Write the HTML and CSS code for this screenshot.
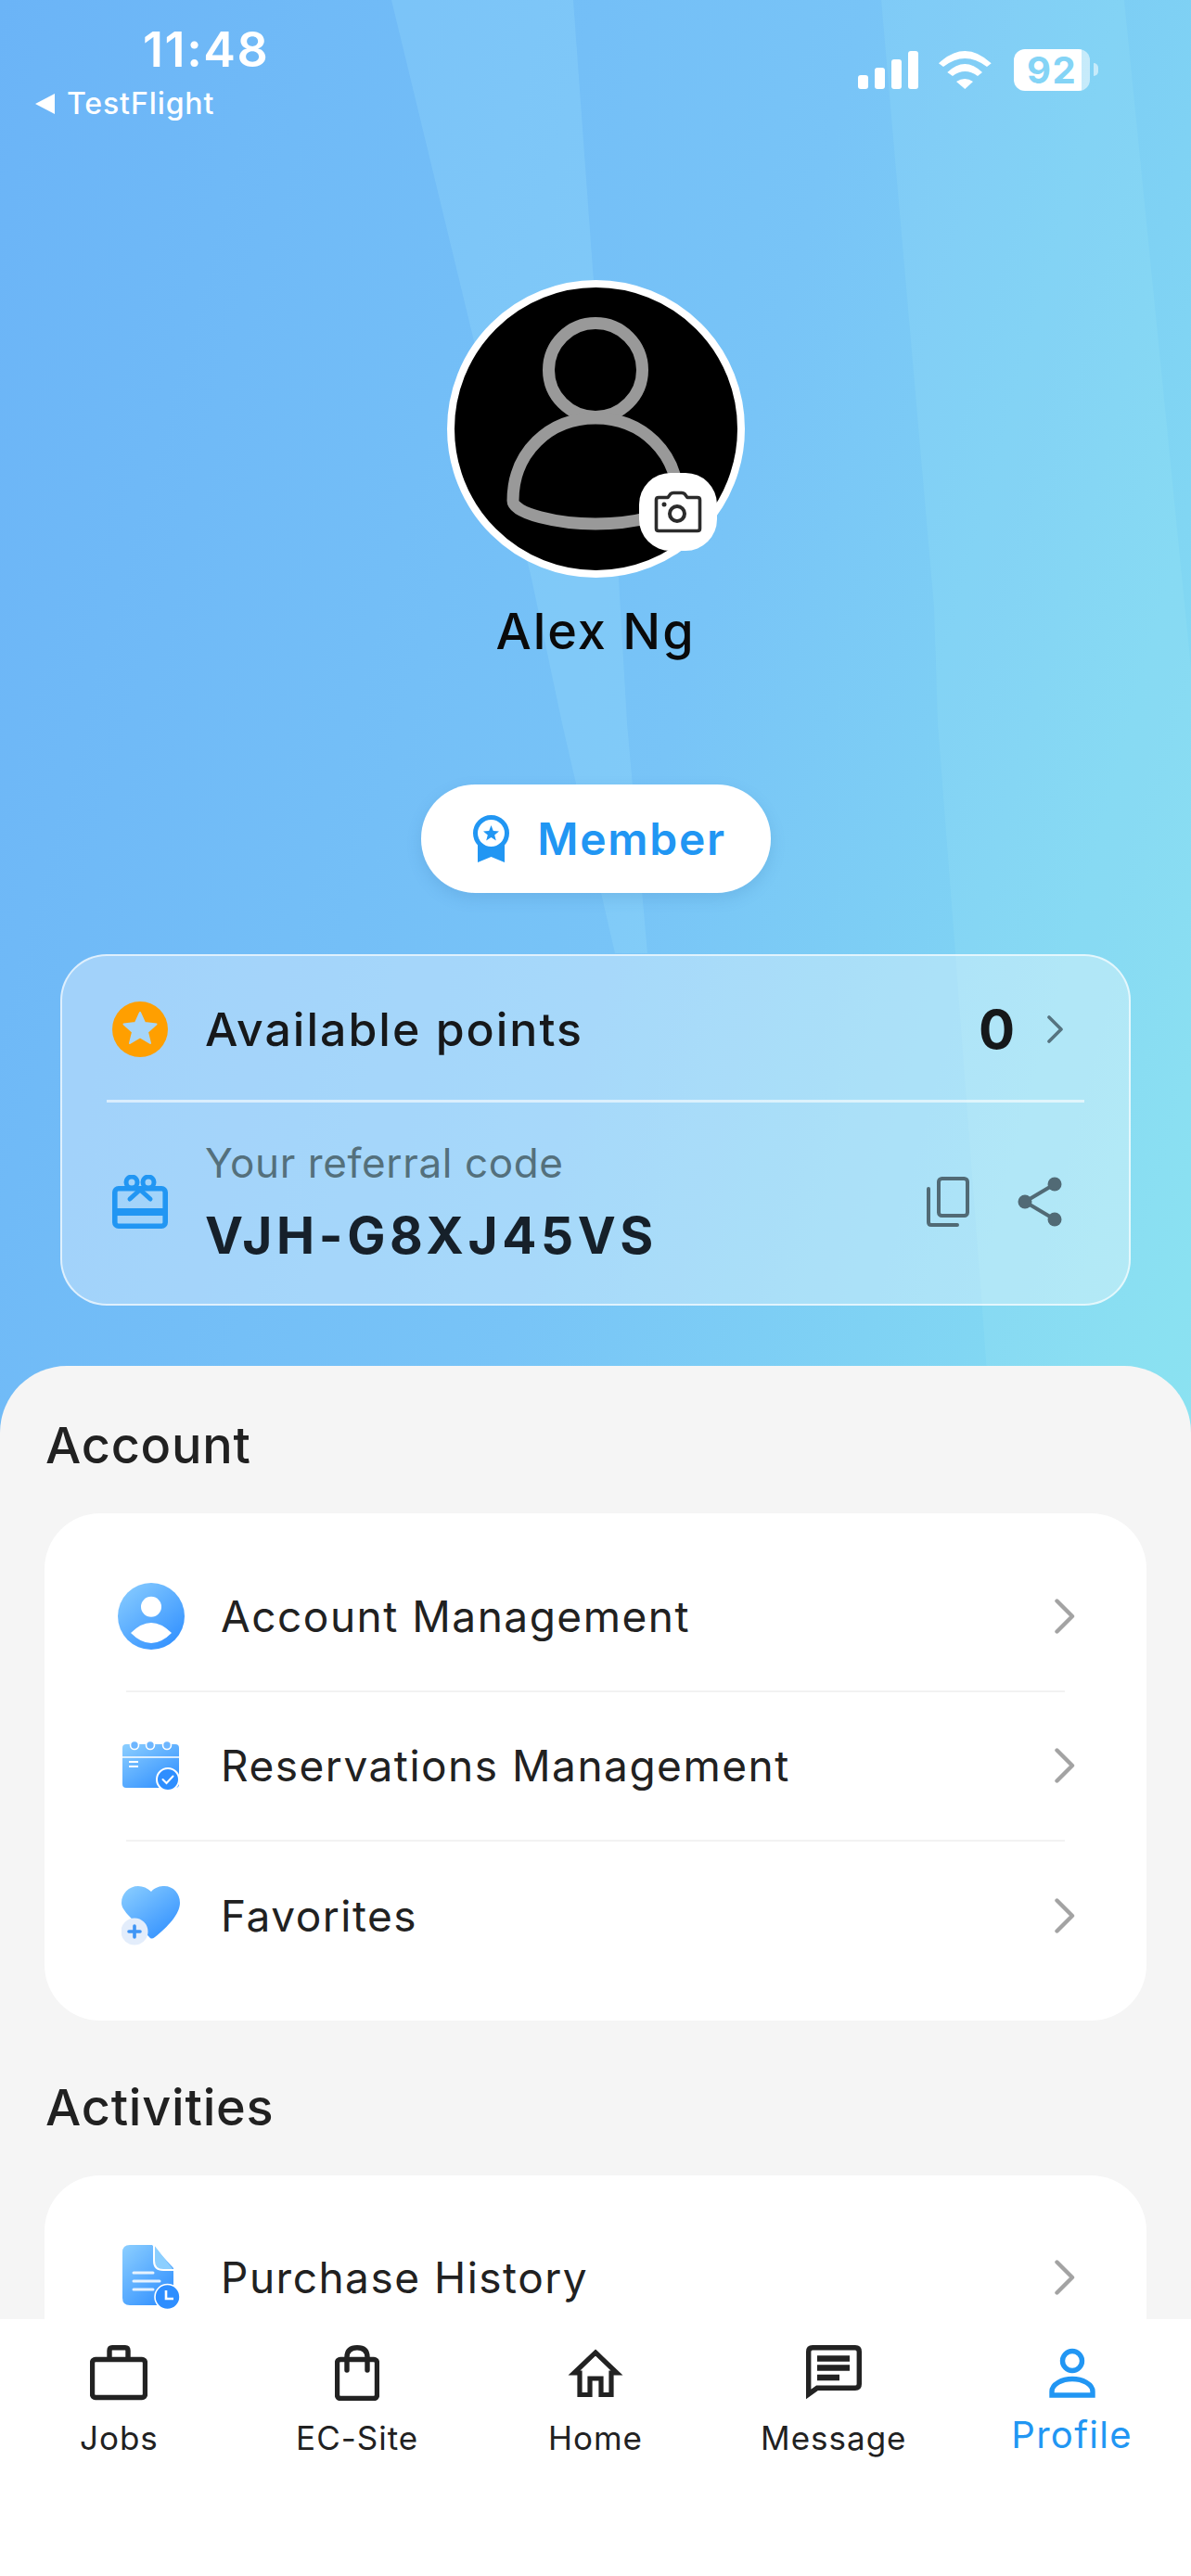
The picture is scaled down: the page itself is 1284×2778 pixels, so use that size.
FILE: index.html
```html
<!DOCTYPE html>
<html lang="en">
<head>
    <meta charset="UTF-8">
    <meta name="viewport" content="width=device-width, initial-scale=1.0">
    <title>Profile</title>
    <link rel="stylesheet" href="styles.css">
</head>
<body>
    <div class="app">
        <svg class="beams" viewBox="0 0 1284 1560" preserveAspectRatio="none">
            <path d="M422 0 L618 0 L639 290 L667 624 L676 780 L698 1028 L663 1028 L606 780 L573 624 Z" fill="#b4f0ff" fill-opacity="0.16"/>
            <path d="M950 0 L1212 0 L1284 720 L1284 1560 L1070 1560 L1030 1028 L1011 780 L1007 655 Z" fill="#b4f4f8" fill-opacity="0.12"/>
        </svg>

        <!-- status bar -->
        <div class="status">
            <div class="status-left">
                <div class="time">11:48</div>
                <div class="back"><span class="back-arrow"></span>TestFlight</div>
            </div>
            <div class="status-right">
                <div class="signal"><span></span><span></span><span></span><span></span></div>
                <svg class="wifi" width="57" height="42" viewBox="0 0 57 42">
                    <path d="M0 13.3 Q28.3 -13.3 56.7 13.3 L52 17 Q28.3 -1 5 17 Z" fill="#fff"/>
                    <path d="M9.3 23 Q28.3 5 47 23 L42 27 Q28.3 17 15 27 Z" fill="#fff"/>
                    <path d="M19 33 Q28.3 27 37 33 L28.3 41 Z" fill="#fff"/>
                </svg>
                <div class="battery">92</div>
            </div>
        </div>

        <!-- avatar + member -->
        <div class="hero">
            <div class="avatar">
                <svg width="305" height="305" viewBox="8 8 305 305">
                    <circle cx="160" cy="97" r="50.5" fill="none" stroke="#999" stroke-width="13"/>
                    <path d="M71 238 C71 186 110 149 160 149 C210 149 249 186 249 238 C249 252 200 263 160 263 C120 263 71 252 71 238 Z" fill="none" stroke="#999" stroke-width="13" stroke-linejoin="round"/>
                </svg>
                <div class="camera">
                    <svg width="84" height="84" viewBox="0 0 84 84">
                        <path d="M21 26.5 H31 L34 22.5 Q35 21.5 37 21.5 H46 Q48 21.5 49 22.5 L52 26.5 H63 Q65.5 26.5 65.5 29 V60 Q65.5 62.5 63 62.5 H21 Q18.5 62.5 18.5 60 V29 Q18.5 26.5 21 26.5 Z" fill="none" stroke="#2b2b2b" stroke-width="3.6" stroke-linejoin="round"/>
                        <circle cx="41" cy="44" r="8" fill="none" stroke="#2b2b2b" stroke-width="4"/>
                        <circle cx="27" cy="34" r="2.5" fill="#2b2b2b"/>
                    </svg>
                </div>
            </div>
            <div class="name">Alex Ng</div>
            <div class="member">
                <svg width="39" height="51" viewBox="0 0 39 51">
                    <path d="M5 30 V51 L19.5 45 L34 51 V30 Z" fill="#2196f3"/>
                    <circle cx="19.5" cy="19.5" r="17" fill="#fff" stroke="#2196f3" stroke-width="5"/>
                    <path d="M19.5 11 L21.8 17 L28 17.4 L23.2 21.4 L24.8 27.5 L19.5 24 L14.2 27.5 L15.8 21.4 L11 17.4 L17.2 17 Z" fill="#2196f3"/>
                </svg>
                Member
            </div>
        </div>

        <!-- points card -->
        <div class="points-card">
            <div class="points-row">
                <svg class="card-icon" width="60" height="60" viewBox="0 0 60 60">
                    <circle cx="30" cy="30" r="30" fill="#ff9f00"/>
                    <path d="M30 12 L35 23 L47.5 24.5 L38 33 L41 45 L30 38.5 L19 45 L22 33 L12.5 24.5 L25 23 Z" fill="#a6d5f9" stroke="#a6d5f9" stroke-width="2" stroke-linejoin="round"/>
                </svg>
                <div class="points-label">Available points</div>
                <div class="points-value">0</div>
                <svg class="points-chevron" width="18" height="30" viewBox="0 0 18 30">
                    <path d="M2 2 L15 15 L2 28" fill="none" stroke="#56737f" stroke-width="3.6" stroke-linecap="round" stroke-linejoin="round"/>
                </svg>
            </div>
            <div class="points-line"></div>
            <div class="referral-row">
                <svg class="card-icon" width="60" height="58" viewBox="0 0 60 58">
                    <rect x="2.8" y="14.8" width="54.4" height="40.4" rx="4" fill="none" stroke="#2196f3" stroke-width="5.6"/>
                    <rect x="2" y="36" width="56" height="8" fill="#2196f3"/>
                    <circle cx="21" cy="8" r="6" fill="none" stroke="#2196f3" stroke-width="5"/>
                    <circle cx="39" cy="8" r="6" fill="none" stroke="#2196f3" stroke-width="5"/>
                    <path d="M30 16 L19 26 M30 16 L41 26" stroke="#2196f3" stroke-width="5" stroke-linecap="round"/>
                </svg>
                <div class="referral-text">
                    <div class="referral-label">Your referral code</div>
                    <div class="referral-code">VJH-G8XJ45VS</div>
                </div>
                <svg class="copy-icon" width="46" height="54" viewBox="0 0 46 54">
                    <rect x="13" y="2" width="31" height="40" rx="3.5" fill="none" stroke="#516a75" stroke-width="4"/>
                    <path d="M2 13 V49 Q2 52 5 52 H33" fill="none" stroke="#516a75" stroke-width="4" stroke-linecap="round"/>
                </svg>
                <svg class="share-icon" width="48" height="54" viewBox="0 0 48 54">
                    <path d="M8 27 L40 8 M8 27 L40 46" stroke="#516a75" stroke-width="4"/>
                    <circle cx="8" cy="27" r="7.5" fill="#516a75"/>
                    <circle cx="40" cy="8" r="7.5" fill="#516a75"/>
                    <circle cx="40" cy="46" r="7.5" fill="#516a75"/>
                </svg>
            </div>
        </div>

        <!-- lists -->
        <div class="sheet">
            <div class="section-title">Account</div>
            <div class="list-card">
                <div class="row">
                    <div class="row-icon">
                        <svg width="72" height="72" viewBox="0 0 72 72">
                            <defs>
                                <linearGradient id="blueGrad" x1="0.1" y1="0" x2="0.9" y2="1">
                                    <stop offset="0" stop-color="#88ccff"/>
                                    <stop offset="1" stop-color="#2e8eff"/>
                                </linearGradient>
                            </defs>
                            <circle cx="36" cy="36" r="36" fill="url(#blueGrad)"/>
                            <circle cx="36" cy="25.7" r="11" fill="#fff"/>
                            <path d="M14 54 Q36 32 58 54 Q36 76 14 54 Z" fill="#fff"/>
                        </svg>
                    </div>
                    <div class="row-label">Account Management</div>
                    <svg class="chevron" width="22" height="38" viewBox="0 0 22 38">
                        <path d="M2.5 2.5 L19 19 L2.5 35.5" fill="none" stroke="#a3a3a3" stroke-width="4.4" stroke-linecap="round" stroke-linejoin="round"/>
                    </svg>
                </div>
                <div class="row-line"></div>
                <div class="row">
                    <div class="row-icon">
                        <svg width="62" height="56" viewBox="0 0 62 56">
                            <rect x="0" y="5" width="61" height="47" rx="4" fill="url(#blueGrad)"/>
                            <path d="M0 19 H61" stroke="#fff" stroke-width="1.6"/>
                            <path d="M7 24 H17 M7 29 H17" stroke="#fff" stroke-width="1.8"/>
                            <g fill="#6db6ff" stroke="#fff" stroke-width="1.6">
                                <circle cx="13" cy="6" r="4.5"/>
                                <circle cx="30" cy="6" r="4.5"/>
                                <circle cx="48" cy="6" r="4.5"/>
                            </g>
                            <circle cx="49" cy="43" r="12" fill="#2e8eff" stroke="#fff" stroke-width="2"/>
                            <path d="M43.5 43 L47.5 47 L54.5 39.5" fill="none" stroke="#fff" stroke-width="2" stroke-linecap="round"/>
                        </svg>
                    </div>
                    <div class="row-label">Reservations Management</div>
                    <svg class="chevron" width="22" height="38" viewBox="0 0 22 38">
                        <path d="M2.5 2.5 L19 19 L2.5 35.5" fill="none" stroke="#a3a3a3" stroke-width="4.4" stroke-linecap="round" stroke-linejoin="round"/>
                    </svg>
                </div>
                <div class="row-line"></div>
                <div class="row">
                    <div class="row-icon">
                        <svg width="64" height="64" viewBox="0 0 64 64">
                            <path d="M32 6 C36 1 42 0 46 0 C56 0 63 8 63 18 C63 30 50 44 36 55 Q32 58 30 55 L6 30 C2 25 0 22 0 18 C0 8 8 0 18 0 C23 0 28 2 32 6 Z" fill="url(#blueGrad)"/>
                            <circle cx="14" cy="49" r="14.5" fill="#e3edfb"/>
                            <path d="M14 43 V55 M8 49 H20" stroke="#3f95f5" stroke-width="3.6" stroke-linecap="round"/>
                        </svg>
                    </div>
                    <div class="row-label">Favorites</div>
                    <svg class="chevron" width="22" height="38" viewBox="0 0 22 38">
                        <path d="M2.5 2.5 L19 19 L2.5 35.5" fill="none" stroke="#a3a3a3" stroke-width="4.4" stroke-linecap="round" stroke-linejoin="round"/>
                    </svg>
                </div>
            </div>

            <div class="section-title section-second">Activities</div>
            <div class="list-card">
                <div class="row">
                    <div class="row-icon">
                        <svg width="62" height="70" viewBox="0 0 62 70">
                            <path d="M8 0 H32 L55 25 V57 Q55 65 47 65 H8 Q0 65 0 57 V8 Q0 0 8 0 Z" fill="url(#blueGrad)"/>
                            <path d="M34 0 V17 Q34 27 44 27 H55" fill="#8ccfff" stroke="#fff" stroke-width="2"/>
                            <path d="M12 30 H33 M12 39 H40 M12 48 H33" stroke="#fff" stroke-width="3" stroke-linecap="round" opacity="0.85"/>
                            <circle cx="48.5" cy="56" r="13.5" fill="#2e8eff" stroke="#fff" stroke-width="1.6"/>
                            <path d="M47 49 V58 H55" fill="none" stroke="#fff" stroke-width="2.6"/>
                        </svg>
                    </div>
                    <div class="row-label">Purchase History</div>
                    <svg class="chevron" width="22" height="38" viewBox="0 0 22 38">
                        <path d="M2.5 2.5 L19 19 L2.5 35.5" fill="none" stroke="#a3a3a3" stroke-width="4.4" stroke-linecap="round" stroke-linejoin="round"/>
                    </svg>
                </div>
            </div>
        </div>

        <!-- tab bar -->
        <div class="nav">
            <div class="nav-item">
                <svg class="nav-icon" width="62" height="60" viewBox="0 0 62 60">
                    <rect x="2.5" y="15.5" width="57" height="41" rx="3.5" fill="none" stroke="#222" stroke-width="5.4"/>
                    <path d="M21 15 V6 Q21 2.7 24 2.7 H38 Q41 2.7 41 6 V15" fill="none" stroke="#222" stroke-width="5.4"/>
                </svg>
                <div class="nav-label">Jobs</div>
            </div>
            <div class="nav-item">
                <svg class="nav-icon" width="48" height="60" viewBox="0 0 48 60">
                    <rect x="2.5" y="15.5" width="43" height="42" rx="3.5" fill="none" stroke="#222" stroke-width="5.4"/>
                    <path d="M13 27 V13 Q13 2.7 24 2.7 Q35 2.7 35 13 V27" fill="none" stroke="#222" stroke-width="5.4" stroke-linecap="round"/>
                </svg>
                <div class="nav-label">EC-Site</div>
            </div>
            <div class="nav-item">
                <svg class="nav-icon" width="60" height="60" viewBox="0 0 60 60">
                    <path d="M30 8 L53 30 H47 V53.5 H36 V36 H24 V53.5 H13 V30 H7 Z" fill="none" stroke="#222" stroke-width="5.2"/>
                </svg>
                <div class="nav-label">Home</div>
            </div>
            <div class="nav-item">
                <svg class="nav-icon" width="60" height="60" viewBox="0 0 60 60">
                    <path d="M7 2.7 H53 Q57.3 2.7 57.3 7 V42 Q57.3 46.3 53 46.3 H12 L2.7 53 V7 Q2.7 2.7 7 2.7 Z" fill="none" stroke="#222" stroke-width="5.4"/>
                    <path d="M12 14.5 H47 M12 24.5 H47 M12 35 H36" stroke="#222" stroke-width="6.6"/>
                </svg>
                <div class="nav-label">Message</div>
            </div>
            <div class="nav-item nav-active">
                <svg class="nav-icon" width="50" height="60" viewBox="0 0 50 60">
                    <circle cx="25" cy="17" r="10.5" fill="none" stroke="#2196f3" stroke-width="5.4"/>
                    <path d="M3 54 V50 C3 42 14 36.5 25 36.5 C36 36.5 47 42 47 50 V54 Z" fill="none" stroke="#2196f3" stroke-width="5.4"/>
                </svg>
                <div class="nav-label">Profile</div>
            </div>
        </div>
    </div>
</body>
</html>
```

FILE: styles.css
```css
body {
    margin: 0;
    font-family: 'Inter', sans-serif;
    color: #212121;
}

.app {
    position: relative;
    width: 1284px;
    height: 2778px;
    overflow: hidden;
    display: flex;
    flex-direction: column;
    background: linear-gradient(105deg, #6bb4f7 0%, #78c4f7 55%, #86e0f1 100%) no-repeat;
    background-size: 100% 1560px;
}

.beams {
    position: absolute;
    top: 0;
    left: 0;
    width: 1284px;
    height: 1560px;
}

.status {
    position: relative;
    height: 130px;
    display: flex;
    justify-content: space-between;
    color: white;
}

.status-left {
    padding: 28px 0 0 38px;
}

.time {
    margin-left: 116px;
    font-size: 52px;
    line-height: 52px;
    font-weight: 600;
    letter-spacing: 1.6px;
}

.back {
    display: flex;
    align-items: center;
    gap: 13px;
    margin-top: 12px;
    font-size: 32px;
    line-height: 40px;
    font-weight: 500;
    letter-spacing: 0.9px;
}

.back-arrow {
    width: 0;
    height: 0;
    border-top: 11px solid transparent;
    border-bottom: 11px solid transparent;
    border-right: 21px solid white;
}

.status-right {
    display: flex;
    align-items: flex-start;
    padding: 53px 109px 0 0;
}

.signal {
    display: flex;
    align-items: flex-end;
    gap: 7px;
    height: 41px;
    margin: 2px 22px 0 0;
}

.signal span {
    width: 11px;
    border-radius: 3px;
    background: white;
}

.signal span:nth-child(1) { height: 15px; }
.signal span:nth-child(2) { height: 23px; }
.signal span:nth-child(3) { height: 32px; }
.signal span:nth-child(4) { height: 41px; }

.wifi {
    margin: 2px 24px 0 0;
}

.battery {
    position: relative;
    width: 82px;
    height: 45px;
    border-radius: 12px;
    background: linear-gradient(90deg, #ffffff 89%, rgba(255, 255, 255, 0.55) 89%);
    color: #84d4f6;
    font-size: 40px;
    line-height: 45px;
    font-weight: 700;
    letter-spacing: 1.5px;
    text-align: center;
}

.battery::after {
    content: '';
    position: absolute;
    left: 86px;
    top: 15px;
    width: 5px;
    height: 14px;
    border-radius: 0 8px 8px 0;
    background: rgba(255, 255, 255, 0.55);
}

.hero {
    position: relative;
    display: flex;
    flex-direction: column;
    align-items: center;
    padding-top: 172px;
}

.avatar {
    position: relative;
    box-sizing: border-box;
    width: 321px;
    height: 321px;
    border: 8px solid white;
    border-radius: 50%;
    background: black;
}

.avatar > svg {
    display: block;
}

.camera {
    position: absolute;
    right: 22px;
    bottom: 21px;
    width: 84px;
    height: 84px;
    border-radius: 34px;
    background: white;
}

.name {
    margin-top: 26px;
    font-size: 54px;
    line-height: 64px;
    font-weight: 500;
    letter-spacing: 2px;
    color: #0a0a0a;
}

.member {
    box-sizing: border-box;
    display: flex;
    align-items: center;
    justify-content: center;
    gap: 30px;
    width: 377px;
    height: 117px;
    margin-top: 133px;
    padding-left: 9px;
    border-radius: 58px;
    background: white;
    box-shadow: 0 6px 16px rgba(50, 110, 170, 0.18);
    color: #2196f3;
    font-size: 48px;
    font-weight: 600;
    letter-spacing: 1.7px;
}

.points-card {
    position: relative;
    box-sizing: border-box;
    width: 1154px;
    height: 379px;
    margin: 66px 0 0 65px;
    padding: 0 48px;
    border: 2.5px solid rgba(255, 255, 255, 0.65);
    border-radius: 50px;
    background: rgba(255, 255, 255, 0.35);
}

.points-row {
    box-sizing: border-box;
    display: flex;
    align-items: center;
    height: 155px;
    padding: 2px 22px 0 6px;
}

.card-icon {
    flex: none;
    margin-right: 40px;
}

.points-label {
    flex: 1;
    font-size: 50px;
    font-weight: 500;
    letter-spacing: 2px;
    color: #16181a;
}

.points-value {
    font-size: 58px;
    font-weight: 700;
    color: #16181a;
}

.points-chevron {
    margin-left: 35px;
}

.points-line {
    height: 3px;
    background: rgba(255, 255, 255, 0.6);
}

.referral-row {
    display: flex;
    align-items: center;
    padding: 38px 24px 0 6px;
}

.referral-text {
    flex: 1;
}

.referral-label {
    font-size: 44px;
    line-height: 54px;
    letter-spacing: 0.6px;
    color: #54707c;
}

.referral-code {
    margin-top: 19px;
    font-size: 55px;
    line-height: 64px;
    font-weight: 700;
    letter-spacing: 4.6px;
    color: #16202a;
}

.copy-icon {
    margin-right: 52px;
}

.sheet {
    position: relative;
    flex: 1;
    min-height: 0;
    margin-top: 65px;
    padding: 0 48px;
    overflow: hidden;
    border-radius: 72px 72px 0 0;
    background: #f5f5f5;
}

.section-title {
    margin-top: 54px;
    padding-left: 1px;
    font-size: 54px;
    line-height: 64px;
    font-weight: 500;
    letter-spacing: 0.8px;
    color: #212121;
}

.section-second {
    margin-top: 62px;
}

.list-card {
    margin-top: 41px;
    padding: 31px 0 33px;
    border-radius: 60px;
    background: white;
}

.row {
    display: flex;
    align-items: center;
    height: 159.5px;
    padding: 0 77px 0 79px;
}

.row-icon {
    display: flex;
    justify-content: center;
    width: 72px;
    margin-right: 39px;
}

.row-label {
    flex: 1;
    font-size: 46px;
    letter-spacing: 1.5px;
    color: #212121;
}

.row-line {
    height: 2px;
    margin: 0 88px;
    background: #f2f2f2;
}

.nav {
    position: relative;
    display: flex;
    height: 277px;
    background: white;
}

.nav-item {
    flex: 1;
    display: flex;
    flex-direction: column;
    align-items: center;
    padding-top: 28px;
}

.nav-label {
    margin-top: 18px;
    font-size: 35px;
    line-height: 44px;
    letter-spacing: 1px;
    color: #212121;
}

.nav-active .nav-label {
    margin-top: 15px;
    font-size: 40px;
    letter-spacing: 1.3px;
    color: #2196f3;
}
```
